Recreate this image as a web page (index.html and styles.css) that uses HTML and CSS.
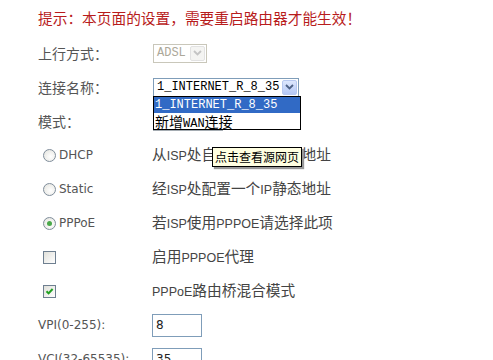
FILE: index.html
```html
<!DOCTYPE html>
<html lang="zh-CN">

<head>
    <meta charset="UTF-8">
    <title>WAN 设置</title>
    <link rel="stylesheet" href="styles.css">
</head>

<body>

<div class="page">
    <p class="tip">提示：本页面的设置，需要重启路由器才能生效！</p>

    <div class="form">
        <div class="row">
            <div class="label">上行方式：</div>
            <div class="value">
                <div class="select disabled adsl">
                    <span class="select-text">ADSL</span>
                    <span class="arrow"><svg width="9" height="6" viewBox="0 0 9 6"><path d="M1 1 L4.5 4.5 L8 1" fill="none" stroke="#c4c4c4" stroke-width="1.8"/></svg></span>
                </div>
            </div>
        </div>

        <div class="row">
            <div class="label">连接名称：</div>
            <div class="value">
                <div class="select conn">
                    <span class="select-text">1_INTERNET_R_8_35</span>
                    <span class="arrow"><svg width="9" height="6" viewBox="0 0 9 6"><path d="M1 1 L4.5 4.5 L8 1" fill="none" stroke="#4d6185" stroke-width="1.8"/></svg></span>
                    <!-- open dropdown list -->
                    <div class="dropdown">
                        <div class="option selected">1_INTERNET_R_8_35</div>
                        <div class="option">新增<span class="mono">WAN</span>连接</div>
                    </div>
                </div>
            </div>
        </div>

        <div class="row">
            <div class="label">模式：</div>
            <div class="value">
                <div class="select mode"></div>
            </div>
        </div>

        <div class="row">
            <div class="label"><span class="radio"></span><span class="opt">DHCP</span></div>
            <div class="value text">从<span class="en">ISP</span>处自动获取一个<span class="en">IP</span>地址
                <div class="tooltip">点击查看源网页</div>
            </div>
        </div>

        <div class="row">
            <div class="label"><span class="radio"></span><span class="opt">Static</span></div>
            <div class="value text">经<span class="en">ISP</span>处配置一个<span class="en">IP</span>静态地址</div>
        </div>

        <div class="row">
            <div class="label"><span class="radio checked"></span><span class="opt">PPPoE</span></div>
            <div class="value text">若<span class="en">ISP</span>使用<span class="en">PPPOE</span>请选择此项</div>
        </div>

        <div class="row">
            <div class="label"><span class="checkbox"></span></div>
            <div class="value text">启用<span class="en">PPPOE</span>代理</div>
        </div>

        <div class="row">
            <div class="label">
                <span class="checkbox"><svg width="11" height="11" viewBox="0 0 11 11"><path d="M2.5 5.2 L4.6 7.4 L8.6 3" fill="none" stroke="#21a121" stroke-width="2"/></svg></span>
            </div>
            <div class="value text"><span class="en">PPPoE</span>路由桥混合模式</div>
        </div>

        <div class="row">
            <div class="label en-label">VPI(0-255):</div>
            <div class="value"><div class="input">8</div></div>
        </div>

        <div class="row">
            <div class="label en-label">VCI(32-65535):</div>
            <div class="value"><div class="input">35</div></div>
        </div>
    </div>
</div>

</body>

</html>
```

FILE: styles.css
```css
body {
    margin: 0;
    background-color: #fff;
    color: #444;
    font-family: "Noto Sans CJK SC", sans-serif;
}

.page {
    padding-left: 38px;
}

.tip {
    margin: 0;
    padding-top: 8px;
    height: 20px;
    line-height: 20px;
    font-size: 14.7px;
    color: #b81c1c;
}

.form {
    padding-top: 8px;
}

.row {
    display: grid;
    grid-template-columns: 114px 1fr;
    align-items: center;
    height: 34px;
}

.label {
    display: flex;
    align-items: center;
    font-size: 14px;
    color: #555;
}

.en-label {
    font-family: "DejaVu Sans", sans-serif;
    font-size: 12px;
}

.value {
    position: relative;
    display: flex;
    align-items: center;
}

.value.text {
    display: block;
    line-height: 20px;
    font-size: 14.7px;
    color: #444;
    white-space: nowrap;
}

.en {
    font-family: "Liberation Sans", sans-serif;
    font-size: 12.5px;
}

.mono {
    font-family: "Liberation Mono", monospace;
    font-size: 12px;
}

/* fake select boxes */
.select {
    position: relative;
    display: flex;
    align-items: center;
    justify-content: space-between;
    box-sizing: border-box;
    height: 19px;
    margin-left: 1px;
    border: 1px solid #7f9db9;
    background-color: #fff;
    font-family: "Liberation Mono", monospace;
    font-size: 12px;
    color: #000;
}

.select-text {
    padding-left: 3px;
}

.arrow {
    display: flex;
    justify-content: center;
    align-items: center;
    width: 15px;
    height: 15px;
    margin-right: 1px;
    box-sizing: border-box;
    border: 1px solid #b7c8f0;
    border-radius: 2px;
    background: linear-gradient(#dde7fd, #b5c8f5);
}

.select.disabled {
    border-color: #c9c7ba;
    color: #aca899;
}

.select.disabled .arrow {
    border-color: #e2e2e2;
    background: #f4f4f2;
}

.adsl {
    width: 54px;
}

.conn {
    width: 146px;
}

.mode {
    width: 70px;
    height: 20px;
    border-color: #a5acb2;
}

.dropdown {
    position: absolute;
    top: 17px;
    left: -1px;
    z-index: 2;
    width: 146px;
    border: 1px solid #000;
    background-color: #fff;
}

.option {
    height: 16px;
    line-height: 16px;
    padding-left: 1px;
    font-family: "Noto Sans CJK SC", sans-serif;
    font-size: 14px;
    color: #000;
}

.option.selected {
    background-color: #316ac5;
    color: #fff;
    font-family: "Liberation Mono", monospace;
    font-size: 12px;
}

/* radio + checkbox */
.radio {
    width: 11px;
    height: 11px;
    margin-left: 5px;
    border: 1px solid #7f8d9b;
    border-radius: 50%;
    background: radial-gradient(circle at 60% 60%, #fff, #e2e2dc);
    display: flex;
    justify-content: center;
    align-items: center;
}

.radio.checked::after {
    content: "";
    width: 5px;
    height: 5px;
    border-radius: 50%;
    background-color: #4aa84a;
}

.opt {
    margin-left: 3px;
    font-family: "DejaVu Sans", sans-serif;
    font-size: 12px;
    color: #555;
}

.checkbox {
    display: flex;
    justify-content: center;
    align-items: center;
    width: 11px;
    height: 11px;
    margin-left: 5px;
    border: 1px solid #6e7f90;
    background: linear-gradient(135deg, #e0e0da, #fff);
}

.input {
    box-sizing: border-box;
    width: 50px;
    height: 23px;
    line-height: 21px;
    padding-left: 3px;
    border: 1px solid #7f9db9;
    font-family: "DejaVu Sans", sans-serif;
    font-size: 12px;
    color: #222;
}

.tooltip {
    position: absolute;
    top: 3px;
    left: 60px;
    z-index: 2;
    padding: 0 2px;
    height: 18px;
    line-height: 18px;
    border: 1px solid #000;
    background-color: #ffffe1;
    font-size: 12px;
    color: #000;
    box-shadow: 2px 2px 1px #999;
}
```
